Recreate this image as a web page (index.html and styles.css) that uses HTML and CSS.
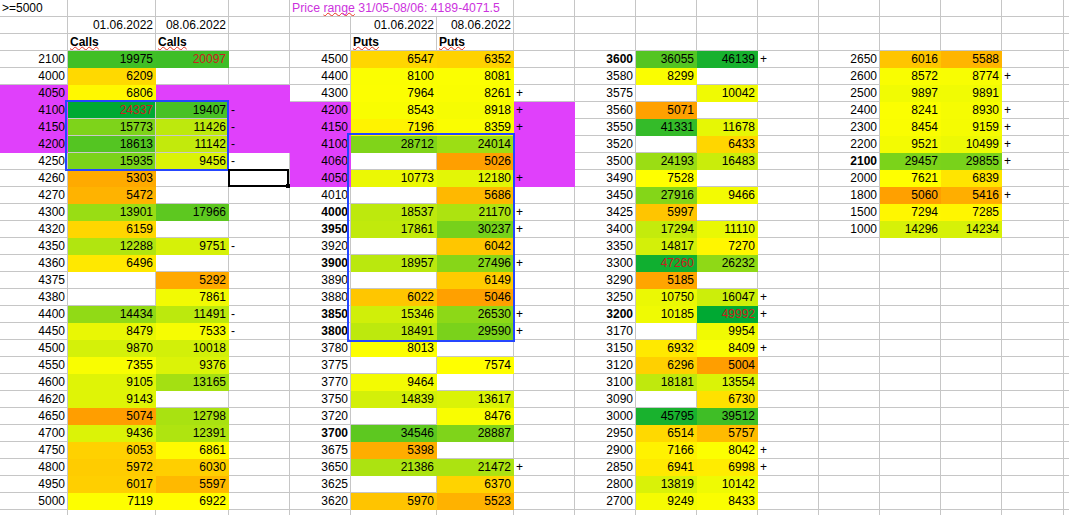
FILE: index.html
```html
<!DOCTYPE html>
<html>
<head>
<meta charset="utf-8">
<title>Options sheet</title>
<link rel="stylesheet" href="styles.css">
</head>
<body>
<div class="wrap">
<div class="sheet">
<!-- row 0 -->
<div>&gt;=5000</div><div></div><div></div><div></div><div class="span3 pr">Price <span class="sq">range</span> 31/05-08/06: 4189-4071.5</div><div></div><div></div><div></div><div></div><div></div><div></div><div></div><div></div><div></div><div></div>
<!-- row 1 -->
<div></div><div class="n">01.06.2022</div><div class="n">08.06.2022</div><div></div><div></div><div class="n">01.06.2022</div><div class="n">08.06.2022</div><div></div><div></div><div></div><div></div><div></div><div></div><div></div><div></div><div></div><div></div>
<!-- row 2 -->
<div></div><div class="b"><span class="sq">Calls</span></div><div class="b"><span class="sq">Calls</span></div><div></div><div></div><div class="b"><span class="sq">Puts</span></div><div class="b"><span class="sq">Puts</span></div><div></div><div></div><div></div><div></div><div></div><div></div><div></div><div></div><div></div><div></div>
<!-- row 3 -->
<div class="n">2100</div><div class="n f" style="background:#40bf26">19975</div><div class="n f r" style="background:#3ebe27">20097</div><div></div>
<div class="n">4500</div><div class="n f" style="background:#ffd600">6547</div><div class="n f" style="background:#ffd200">6352</div><div></div>
<div class="n b">3600</div><div class="n f" style="background:#54c522">36055</div><div class="n f" style="background:#17b12e">46139</div><div>+</div>
<div class="n">2650</div><div class="n f" style="background:#ffc500">6016</div><div class="n f" style="background:#ffb500">5588</div><div></div><div></div>
<!-- row 4 -->
<div class="n">4000</div><div class="n f" style="background:#ffd900">6209</div><div></div><div></div>
<div class="n">4400</div><div class="n f" style="background:#fbfe01">8100</div><div class="n f" style="background:#fbfe01">8081</div><div></div>
<div class="n">3580</div><div class="n f" style="background:#fafd01">8299</div><div></div><div></div>
<div class="n">2600</div><div class="n f" style="background:#f9fd01">8572</div><div class="n f" style="background:#f8fd02">8774</div><div>+</div><div></div>
<!-- row 5 -->
<div class="n m">4050</div><div class="n f" style="background:#fff800">6806</div><div class="m"></div><div class="m"></div>
<div class="n">4300</div><div class="n f" style="background:#fcfe01">7964</div><div class="n f" style="background:#fafd01">8261</div><div>+</div>
<div class="n">3575</div><div></div><div class="n f" style="background:#f0fa03">10042</div><div></div>
<div class="n">2500</div><div class="n f" style="background:#f1fb03">9897</div><div class="n f" style="background:#f1fb03">9891</div><div></div><div></div>
<!-- row 6 -->
<div class="n m">4100</div><div class="n f g r" style="background:#00a933">24337</div><div class="n f g" style="background:#48c125">19407</div><div class="m">-</div>
<div class="n m">4200</div><div class="n f" style="background:#f9fd01">8543</div><div class="n f" style="background:#f6fc02">8918</div><div class="m">+</div>
<div class="n">3560</div><div class="n f" style="background:#ffa100">5071</div><div></div><div></div>
<div class="n">2400</div><div class="n f" style="background:#fbfe01">8241</div><div class="n f" style="background:#f6fc02">8930</div><div>+</div><div></div>
<!-- row 7 -->
<div class="n m">4150</div><div class="n f g" style="background:#7ed31a">15773</div><div class="n f g" style="background:#bde90d">11426</div><div class="m">-</div>
<div class="n m">4150</div><div class="n f" style="background:#fff300">7196</div><div class="n f" style="background:#fafd01">8359</div><div class="m">+</div>
<div class="n">3550</div><div class="n f" style="background:#34bb29">41331</div><div class="n f" style="background:#e6f705">11678</div><div></div>
<div class="n">2300</div><div class="n f" style="background:#fafd01">8454</div><div class="n f" style="background:#f5fb02">9159</div><div>+</div><div></div>
<!-- row 8 -->
<div class="n m">4200</div><div class="n f g" style="background:#54c522">18613</div><div class="n f g" style="background:#c2ea0c">11142</div><div class="m">-</div>
<div class="n m">4100</div><div class="n f" style="background:#80d419">28712</div><div class="n f" style="background:#9cde14">24014</div><div class="m"></div>
<div class="n">3520</div><div></div><div class="n f" style="background:#ffd600">6433</div><div></div>
<div class="n">2200</div><div class="n f" style="background:#f3fb02">9521</div><div class="n f" style="background:#edf904">10499</div><div>+</div><div></div>
<!-- row 9 -->
<div class="n">4250</div><div class="n f g" style="background:#7bd31a">15935</div><div class="n f g" style="background:#daf307">9456</div><div>-</div>
<div class="n m">4060</div><div></div><div class="n f" style="background:#ff9f00">5026</div><div class="m"></div>
<div class="n">3500</div><div class="n f" style="background:#9bdd14">24193</div><div class="n f" style="background:#c9ed0b">16483</div><div></div>
<div class="n b">2100</div><div class="n f" style="background:#7bd31a">29457</div><div class="n f" style="background:#79d21b">29855</div><div>+</div><div></div>
<!-- row 10 -->
<div class="n">4260</div><div class="n f" style="background:#ffaa00">5303</div><div></div><div></div>
<div class="n m">4050</div><div class="n f" style="background:#ebf804">10773</div><div class="n f" style="background:#e3f606">12180</div><div class="m">+</div>
<div class="n">3490</div><div class="n f" style="background:#ffff00">7528</div><div></div><div></div>
<div class="n">2000</div><div class="n f" style="background:#ffff00">7621</div><div class="n f" style="background:#ffe500">6839</div><div></div><div></div>
<!-- row 11 -->
<div class="n">4270</div><div class="n f" style="background:#ffb300">5472</div><div></div><div></div>
<div class="n">4010</div><div></div><div class="n f" style="background:#ffb800">5686</div><div></div>
<div class="n">3450</div><div class="n f" style="background:#84d618">27916</div><div class="n f" style="background:#f3fb02">9466</div><div></div>
<div class="n">1800</div><div class="n f" style="background:#ffa000">5060</div><div class="n f" style="background:#ffae00">5416</div><div>+</div><div></div>
<!-- row 12 -->
<div class="n">4300</div><div class="n f" style="background:#99dd14">13901</div><div class="n f" style="background:#5dc820">17966</div><div></div>
<div class="n b">4000</div><div class="n f" style="background:#bde90d">18537</div><div class="n f" style="background:#ade310">21170</div><div>+</div>
<div class="n">3425</div><div class="n f" style="background:#ffc500">5997</div><div></div><div></div>
<div class="n">1500</div><div class="n f" style="background:#fff700">7294</div><div class="n f" style="background:#fff600">7285</div><div></div><div></div>
<!-- row 13 -->
<div class="n">4320</div><div class="n f" style="background:#ffd600">6159</div><div></div><div></div>
<div class="n b">3950</div><div class="n f" style="background:#c1ea0c">17861</div><div class="n f" style="background:#77d11b">30237</div><div>+</div>
<div class="n">3400</div><div class="n f" style="background:#c4eb0c">17294</div><div class="n f" style="background:#e9f804">11110</div><div></div>
<div class="n">1000</div><div class="n f" style="background:#d6f108">14296</div><div class="n f" style="background:#d6f108">14234</div><div></div><div></div>
<!-- row 14 -->
<div class="n">4350</div><div class="n f" style="background:#b1e510">12288</div><div class="n f" style="background:#d6f108">9751</div><div>-</div>
<div class="n">3920</div><div></div><div class="n f" style="background:#ffc600">6042</div><div></div>
<div class="n">3350</div><div class="n f" style="background:#d3f009">14817</div><div class="n f" style="background:#fff600">7270</div><div></div>
<div></div><div></div><div></div><div></div><div></div>
<!-- row 15 -->
<div class="n">4360</div><div class="n f" style="background:#ffe800">6496</div><div></div><div></div>
<div class="n b">3900</div><div class="n f" style="background:#bae80e">18957</div><div class="n f" style="background:#87d618">27496</div><div>+</div>
<div class="n">3300</div><div class="n f r" style="background:#10af30">47260</div><div class="n f" style="background:#8fd916">26232</div><div></div>
<div></div><div></div><div></div><div></div><div></div>
<!-- row 16 -->
<div class="n">4375</div><div></div><div class="n f" style="background:#ffa900">5292</div><div></div>
<div class="n">3890</div><div></div><div class="n f" style="background:#ffcb00">6149</div><div></div>
<div class="n">3290</div><div class="n f" style="background:#ffa500">5185</div><div></div><div></div>
<div></div><div></div><div></div><div></div><div></div>
<!-- row 17 -->
<div class="n">4380</div><div></div><div class="n f" style="background:#f2fa03">7861</div><div></div>
<div class="n">3880</div><div class="n f" style="background:#ffc600">6022</div><div class="n f" style="background:#ffa000">5046</div><div></div>
<div class="n">3250</div><div class="n f" style="background:#ebf804">10750</div><div class="n f" style="background:#ccee0a">16047</div><div>+</div>
<div></div><div></div><div></div><div></div><div></div>
<!-- row 18 -->
<div class="n">4400</div><div class="n f" style="background:#91da16">14434</div><div class="n f" style="background:#bce90d">11491</div><div>-</div>
<div class="n b">3850</div><div class="n f" style="background:#d0ef09">15346</div><div class="n f" style="background:#8dd817">26530</div><div>+</div>
<div class="n b">3200</div><div class="n f" style="background:#effa03">10185</div><div class="n f r" style="background:#00a933">49992</div><div>+</div>
<div></div><div></div><div></div><div></div><div></div>
<!-- row 19 -->
<div class="n">4450</div><div class="n f" style="background:#e9f704">8479</div><div class="n f" style="background:#f6fc02">7533</div><div>-</div>
<div class="n b">3800</div><div class="n f" style="background:#bde90d">18491</div><div class="n f" style="background:#7ad21b">29590</div><div>+</div>
<div class="n">3170</div><div></div><div class="n f" style="background:#f0fa03">9954</div><div></div>
<div></div><div></div><div></div><div></div><div></div>
<!-- row 20 -->
<div class="n">4500</div><div class="n f" style="background:#d4f109">9870</div><div class="n f" style="background:#d2f009">10018</div><div></div>
<div class="n">3780</div><div class="n f" style="background:#fcfe01">8013</div><div></div><div></div>
<div class="n">3150</div><div class="n f" style="background:#ffe900">6932</div><div class="n f" style="background:#fafd01">8409</div><div>+</div>
<div></div><div></div><div></div><div></div><div></div>
<!-- row 21 -->
<div class="n">4550</div><div class="n f" style="background:#f9fd01">7355</div><div class="n f" style="background:#dbf307">9376</div><div></div>
<div class="n">3775</div><div></div><div class="n f" style="background:#ffff00">7574</div><div></div>
<div class="n">3120</div><div class="n f" style="background:#ffd000">6296</div><div class="n f" style="background:#ff9e00">5004</div><div></div>
<div></div><div></div><div></div><div></div><div></div>
<!-- row 22 -->
<div class="n">4600</div><div class="n f" style="background:#dff406">9105</div><div class="n f" style="background:#a4e012">13165</div><div></div>
<div class="n">3770</div><div class="n f" style="background:#f3fb02">9464</div><div></div><div></div>
<div class="n">3100</div><div class="n f" style="background:#bfe90d">18181</div><div class="n f" style="background:#daf307">13554</div><div></div>
<div></div><div></div><div></div><div></div><div></div>
<!-- row 23 -->
<div class="n">4620</div><div class="n f" style="background:#dff406">9143</div><div></div><div></div>
<div class="n">3750</div><div class="n f" style="background:#d3f009">14839</div><div class="n f" style="background:#daf307">13617</div><div></div>
<div class="n">3090</div><div></div><div class="n f" style="background:#ffe100">6730</div><div></div>
<div></div><div></div><div></div><div></div><div></div>
<!-- row 24 -->
<div class="n">4650</div><div class="n f" style="background:#ff9e00">5074</div><div class="n f" style="background:#a9e211">12798</div><div></div>
<div class="n">3720</div><div></div><div class="n f" style="background:#f9fd01">8476</div><div></div>
<div class="n">3000</div><div class="n f" style="background:#19b22e">45795</div><div class="n f" style="background:#3fbe26">39512</div><div></div>
<div></div><div></div><div></div><div></div><div></div>
<!-- row 25 -->
<div class="n">4700</div><div class="n f" style="background:#dbf307">9436</div><div class="n f" style="background:#afe410">12391</div><div></div>
<div class="n b">3700</div><div class="n f" style="background:#5dc820">34546</div><div class="n f" style="background:#7fd41a">28887</div><div></div>
<div class="n">2950</div><div class="n f" style="background:#ffd900">6514</div><div class="n f" style="background:#ffbb00">5757</div><div></div>
<div></div><div></div><div></div><div></div><div></div>
<!-- row 26 -->
<div class="n">4750</div><div class="n f" style="background:#ffd100">6053</div><div class="n f" style="background:#fffa00">6861</div><div></div>
<div class="n">3675</div><div class="n f" style="background:#ffad00">5398</div><div></div><div></div>
<div class="n">2900</div><div class="n f" style="background:#fff200">7166</div><div class="n f" style="background:#fcfe01">8042</div><div>+</div>
<div></div><div></div><div></div><div></div><div></div>
<!-- row 27 -->
<div class="n">4800</div><div class="n f" style="background:#ffcc00">5972</div><div class="n f" style="background:#ffcf00">6030</div><div></div>
<div class="n">3650</div><div class="n f" style="background:#ace311">21386</div><div class="n f" style="background:#ace311">21472</div><div>+</div>
<div class="n">2850</div><div class="n f" style="background:#ffe900">6941</div><div class="n f" style="background:#ffec00">6998</div><div>+</div>
<div></div><div></div><div></div><div></div><div></div>
<!-- row 28 -->
<div class="n">4950</div><div class="n f" style="background:#ffcf00">6017</div><div class="n f" style="background:#ffb900">5597</div><div></div>
<div class="n">3625</div><div></div><div class="n f" style="background:#ffd300">6370</div><div></div>
<div class="n">2800</div><div class="n f" style="background:#d9f208">13819</div><div class="n f" style="background:#effa03">10142</div><div></div>
<div></div><div></div><div></div><div></div><div></div>
<!-- row 29 -->
<div class="n">5000</div><div class="n f" style="background:#fdfe00">7119</div><div class="n f" style="background:#fffd00">6922</div><div></div>
<div class="n">3620</div><div class="n f" style="background:#ffc400">5970</div><div class="n f" style="background:#ffb200">5523</div><div></div>
<div class="n">2700</div><div class="n f" style="background:#f5fb02">9249</div><div class="n f" style="background:#fafd01">8433</div><div></div>
<div></div><div></div><div></div><div></div><div></div>
<!-- row 30 (partly visible) -->
<div class="t"></div><div class="t"></div><div class="t"></div><div class="t"></div><div class="t"></div><div class="t"></div><div class="t"></div><div class="t"></div><div class="t"></div><div class="t"></div><div class="t"></div><div class="t"></div><div class="t"></div><div class="t"></div><div class="t"></div><div class="t"></div><div class="t"></div>
</div>
<div class="range range-calls"></div>
<div class="range range-puts"></div>
<div class="cursor"></div>
<div class="handle"></div>
</div>
</body>
</html>
```

FILE: styles.css
```css
html, body {
  margin: 0;
  padding: 0;
  overflow: hidden;
  background: #ffffff;
}

.wrap {
  position: relative;
  width: 1069px;
  height: 515px;
}

.sheet {
  display: grid;
  grid-template-columns: 68px 88px 73px 61px 61px 86px 77px 61px 61px 61px 61px 61px 61px 61px 61px 62px 6px;
  grid-template-rows: repeat(30, 17px) 5px;
  width: 1069px;
  font-family: "Liberation Sans", Arial, sans-serif;
  font-size: 12px;
  color: #000000;
}

.sheet > div {
  box-sizing: border-box;
  border-right: 1px solid #c6c6c6;
  border-bottom: 1px solid #c6c6c6;
  padding: 1px 2px 0 2px;
  line-height: 15px;
  white-space: nowrap;
  overflow: hidden;
}

.sheet > .t {
  border-bottom: none;
  padding: 0;
}

.sheet > .n {
  text-align: right;
}

.sheet > .f {
  border-color: transparent;
}

.sheet > .m {
  background: #e040fb;
  border-color: transparent;
}

.sheet > .g {
  border-color: #c9c9c9;
}

.sheet > .b {
  font-weight: bold;
}

.sheet > .r {
  color: #c9211e;
}

.sheet > .span3 {
  grid-column: span 3;
}

.sheet > .pr {
  color: #cc33dd;
  font-size: 12.3px;
}

.sq {
  text-decoration-line: underline;
  text-decoration-style: wavy;
  text-decoration-color: #e8321e;
  text-decoration-thickness: 1px;
  text-underline-offset: 0;
  text-decoration-skip-ink: none;
}

.range {
  position: absolute;
  box-sizing: border-box;
  border: 2px solid #2546ff;
}

.range-calls {
  left: 65px;
  top: 100px;
  width: 164px;
  height: 71px;
}

.range-puts {
  left: 347px;
  top: 133px;
  width: 168px;
  height: 209px;
}

.cursor {
  position: absolute;
  box-sizing: border-box;
  left: 228px;
  top: 169px;
  width: 61px;
  height: 18px;
  border: 2px solid #000000;
}

.handle {
  position: absolute;
  left: 286px;
  top: 184px;
  width: 4px;
  height: 4px;
  background: #000000;
}
```
